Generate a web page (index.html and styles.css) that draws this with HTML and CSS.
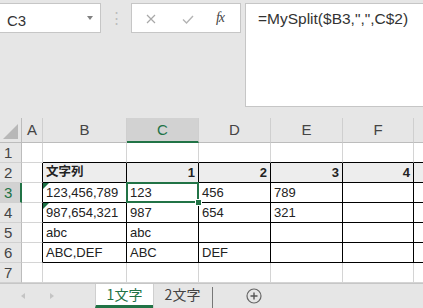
FILE: index.html
```html
<!DOCTYPE html>
<html lang="ja">
<head>
    <meta charset="UTF-8">
    <title>MySplit</title>
    <link rel="stylesheet" href="styles.css">
</head>
<body>
    <div class="topbar">
        <div class="namebox">C3<span class="drop"></span></div>
        <div class="dots">&#8942;</div>
        <div class="fxbox">
            <span class="fx-btn">
                <svg width="10" height="10" viewBox="0 0 10 10"><path d="M1 1L9 9M9 1L1 9" stroke="#a8a8a8" stroke-width="1.2" fill="none"/></svg>
            </span>
            <span class="fx-btn">
                <svg width="12" height="9" viewBox="0 0 12 9"><path d="M1 4.5L4.5 8L11 1" stroke="#b4b4b4" stroke-width="1.4" fill="none"/></svg>
            </span>
            <span class="fx-btn fx-label">fx</span>
        </div>
        <div class="formula">=MySplit($B3,",",C$2)</div>
    </div>

    <div class="sheet-wrap">
        <div class="sheet">
            <div class="c h corner"><span class="tri"></span></div>
            <div class="c h">A</div>
            <div class="c h">B</div>
            <div class="c h sel-col">C</div>
            <div class="c h">D</div>
            <div class="c h">E</div>
            <div class="c h">F</div>
            <div class="c h"></div>

            <div class="c rh">1</div>
            <div class="c"></div>
            <div class="c bb"></div>
            <div class="c bb"></div>
            <div class="c bb"></div>
            <div class="c bb"></div>
            <div class="c bb"></div>
            <div class="c bb"></div>

            <div class="c rh">2</div>
            <div class="c br"></div>
            <div class="c t head cjk">文字列</div>
            <div class="c t head num">1</div>
            <div class="c t head num">2</div>
            <div class="c t head num">3</div>
            <div class="c t head num">4</div>
            <div class="c t head"></div>

            <div class="c rh sel-row">3</div>
            <div class="c br"></div>
            <div class="c t err">123,456,789</div>
            <div class="c t active">123</div>
            <div class="c t">456</div>
            <div class="c t">789</div>
            <div class="c t"></div>
            <div class="c t"></div>

            <div class="c rh">4</div>
            <div class="c br"></div>
            <div class="c t err">987,654,321</div>
            <div class="c t">987</div>
            <div class="c t">654</div>
            <div class="c t">321</div>
            <div class="c t"></div>
            <div class="c t"></div>

            <div class="c rh">5</div>
            <div class="c br"></div>
            <div class="c t">abc</div>
            <div class="c t">abc</div>
            <div class="c t"></div>
            <div class="c t"></div>
            <div class="c t"></div>
            <div class="c t"></div>

            <div class="c rh">6</div>
            <div class="c br"></div>
            <div class="c t">ABC,DEF</div>
            <div class="c t">ABC</div>
            <div class="c t">DEF</div>
            <div class="c t"></div>
            <div class="c t"></div>
            <div class="c t"></div>

            <div class="c rh">7</div>
            <div class="c"></div>
            <div class="c"></div>
            <div class="c"></div>
            <div class="c"></div>
            <div class="c"></div>
            <div class="c"></div>
            <div class="c"></div>
        </div>
    </div>

    <div class="tabbar">
        <div class="nav">
            <span class="arrow left"></span>
            <span class="arrow right"></span>
        </div>
        <div class="tab active-tab">1文字</div>
        <div class="tab">2文字</div>
        <div class="tab-sep"></div>
        <div class="add">
            <svg width="16" height="16" viewBox="0 0 16 16"><circle cx="8" cy="8" r="7" stroke="#666" stroke-width="1.2" fill="none"/><path d="M8 4.5V11.5M4.5 8H11.5" stroke="#555" stroke-width="1.4"/></svg>
        </div>
    </div>
</body>
</html>
```

FILE: styles.css
```css
body {
    margin: 0;
    width: 423px;
    height: 308px;
    overflow: hidden;
    background: #e6e6e6;
    font-family: "Liberation Sans", "Noto Sans CJK JP", sans-serif;
    color: #222;
}
.topbar {
    height: 118px;
    display: flex;
    align-items: flex-start;
    padding-top: 3px;
    box-sizing: border-box;
}
.namebox {
    width: 102px;
    height: 30px;
    margin-left: -1px;
    box-sizing: border-box;
    background: #fff;
    border: 1px solid #c6c6c6;
    padding: 5px 0 0 7px;
    font-size: 15px;
    color: #333;
    display: flex;
    align-items: center;
    justify-content: space-between;
}
.drop {
    width: 0;
    height: 0;
    margin-right: 7px;
    margin-top: -6px;
    border-left: 3.5px solid transparent;
    border-right: 3.5px solid transparent;
    border-top: 4px solid #808080;
}
.dots {
    width: 30px;
    text-align: center;
    color: #bdbdbd;
    font-size: 15px;
    line-height: 30px;
}
.fxbox {
    width: 110px;
    height: 30px;
    box-sizing: border-box;
    background: #fff;
    border: 1px solid #c6c6c6;
    display: flex;
    align-items: center;
}
.fx-btn {
    width: 37px;
    display: flex;
    justify-content: center;
    padding-top: 2px;
}
.fx-btn:nth-child(3) {
    width: 28px;
}
.fx-label {
    font-family: "Liberation Serif", serif;
    font-style: italic;
    font-size: 14px;
    letter-spacing: -1px;
    color: #444;
    padding-top: 0;
}
.formula {
    flex: 1;
    height: 104px;
    margin-left: 4px;
    margin-right: -2px;
    box-sizing: border-box;
    background: #fff;
    border: 1px solid #c6c6c6;
    padding: 6px 0 0 12px;
    font-size: 15.5px;
    line-height: 18px;
    color: #333;
}
.sheet-wrap {
    height: 165px;
    overflow: hidden;
}
.sheet {
    display: grid;
    grid-template-columns: 22px 21px 84px 72px 72px 72px 71px 72px;
    grid-template-rows: 25px repeat(7, 20px);
    width: 486px;
    background: #fff;
}
.c {
    box-sizing: border-box;
    border-right: 1px solid #d4d4d4;
    border-bottom: 1px solid #d4d4d4;
    font-size: 13px;
    line-height: 19px;
    padding: 0 3px;
    white-space: nowrap;
    overflow: hidden;
    position: relative;
}
.h {
    background: #e6e6e6;
    border-right-color: #cfcfcf;
    border-bottom-color: #bcbcbc;
    font-size: 15px;
    line-height: 24px;
    text-align: center;
    color: #444;
}
.corner {
    border-right-color: #bcbcbc;
}
.tri {
    position: absolute;
    right: 3px;
    bottom: 3px;
    width: 0;
    height: 0;
    border-left: 15px solid transparent;
    border-bottom: 15px solid #b8b8b8;
}
.rh {
    background: #e6e6e6;
    border-right-color: #bcbcbc;
    border-bottom-color: #d0d0d0;
    font-size: 15px;
    padding-left: 4px;
    color: #444;
}
.sel-col {
    background: #d2d2d2;
    border-bottom: 2px solid #217346;
    color: #217346;
}
.sel-row {
    background: #d2d2d2;
    border-right: 2px solid #217346;
    color: #217346;
}
.bb {
    border-bottom-color: #000;
}
.br {
    border-right-color: #000;
}
.t {
    border-right-color: #000;
    border-bottom-color: #000;
}
.head {
    background: #ededed;
    font-weight: bold;
}
.num {
    text-align: right;
}
.cjk {
    font-size: 12.5px;
}
.err::before {
    content: "";
    position: absolute;
    left: 0;
    top: 0;
    border-top: 6px solid #1e7145;
    border-right: 6px solid transparent;
}
.active {
    overflow: visible;
}
.active::after {
    content: "";
    position: absolute;
    left: -1px;
    top: -1px;
    right: -1px;
    bottom: -1px;
    border: 2px solid #217346;
}
.active::before {
    content: "";
    position: absolute;
    right: -4px;
    bottom: -4px;
    width: 5px;
    height: 5px;
    background: #217346;
    border: 1px solid #fff;
    z-index: 2;
}
.tabbar {
    height: 25px;
    display: flex;
    align-items: stretch;
    border-top: 1px solid #c6c6c6;
    box-sizing: border-box;
    background: #e6e6e6;
}
.nav {
    width: 95px;
    display: flex;
    align-items: center;
    padding-left: 21px;
    box-sizing: border-box;
}
.arrow {
    width: 0;
    height: 0;
    border-top: 3.5px solid transparent;
    border-bottom: 3.5px solid transparent;
}
.arrow.left {
    border-right: 4px solid #c4c4c4;
}
.arrow.right {
    margin-left: 25px;
    border-left: 4px solid #c4c4c4;
}
.tab {
    width: 58px;
    box-sizing: border-box;
    font-family: "Noto Sans CJK JP", sans-serif;
    font-size: 14px;
    line-height: 21px;
    text-align: center;
    color: #444;
    border-left: 1px solid #cfcfcf;
}
.active-tab {
    background: #fff;
    color: #217346;
    border-bottom: 3px solid #217346;
}
.tab-sep {
    width: 1px;
    margin: 3px 0 0 1px;
    background: #777;
}
.add {
    display: flex;
    align-items: center;
    padding-left: 33px;
}
```
